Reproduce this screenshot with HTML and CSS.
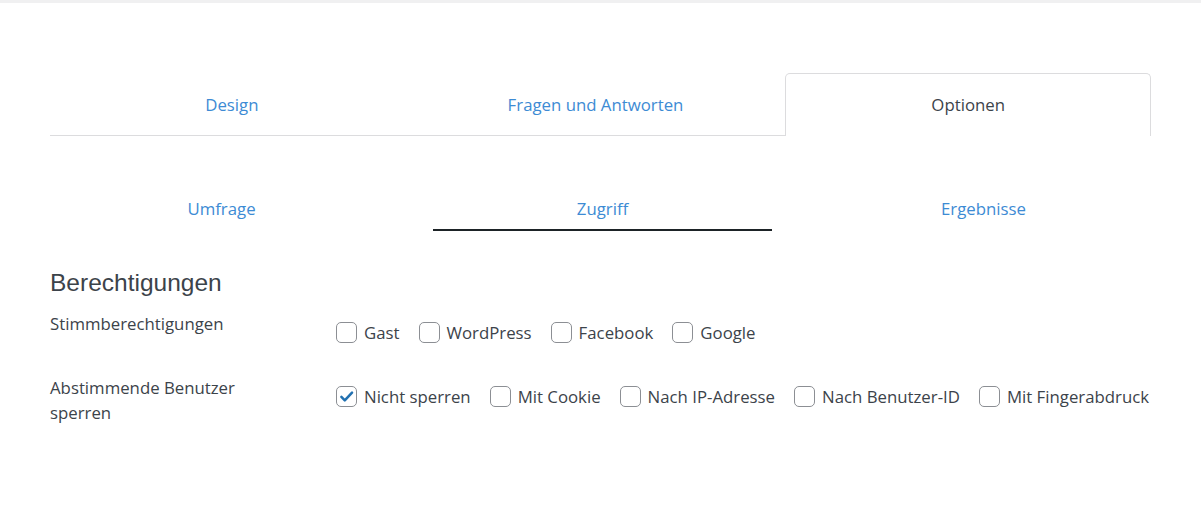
FILE: index.html
```html
<!DOCTYPE html>
<html lang="de">
<head>
<meta charset="utf-8">
<title>Optionen</title>
<link rel="stylesheet" href="styles.css">
</head>
<body>
<div class="topbar"></div>
<div class="wrap">
  <ul class="tabs">
    <li class="tab"><a href="#">Design</a></li>
    <li class="tab"><a href="#">Fragen und Antworten</a></li>
    <li class="tab active"><span>Optionen</span></li>
  </ul>

  <ul class="subtabs">
    <li class="subtab"><a href="#">Umfrage</a></li>
    <li class="subtab active"><a href="#">Zugriff</a></li>
    <li class="subtab"><a href="#">Ergebnisse</a></li>
  </ul>

  <h2 class="heading">Berechtigungen</h2>

  <div class="row">
    <div class="label">Stimmberechtigungen</div>
    <div class="options">
      <label class="opt"><span class="cb"></span>Gast</label>
      <label class="opt"><span class="cb"></span>WordPress</label>
      <label class="opt"><span class="cb"></span>Facebook</label>
      <label class="opt"><span class="cb"></span>Google</label>
    </div>
  </div>

  <div class="row">
    <div class="label">Abstimmende Benutzer sperren</div>
    <div class="options">
      <label class="opt"><span class="cb checked"><svg viewBox="0 0 20 20" width="17" height="17"><path d="M4 10.5l4 4 8.5-9" fill="none" stroke="#2271b1" stroke-width="3" stroke-linecap="round" stroke-linejoin="round"/></svg></span>Nicht sperren</label>
      <label class="opt"><span class="cb"></span>Mit Cookie</label>
      <label class="opt"><span class="cb"></span>Nach IP-Adresse</label>
      <label class="opt"><span class="cb"></span>Nach Benutzer-ID</label>
      <label class="opt"><span class="cb"></span>Mit Fingerabdruck</label>
    </div>
  </div>
</div>
</body>
</html>
```

FILE: styles.css
```css
* { box-sizing: border-box; }
html, body { margin: 0; padding: 0; background: #fff; }
body {
  font-family: "Open Sans", "Noto Sans", sans-serif;
  font-size: 16.8px;
  color: #3c434a;
  width: 1201px;
  height: 517px;
  overflow: hidden;
}
.topbar { height: 3px; background: #f0f0f1; }
.wrap { padding: 0 50px 0 50px; }

.tabs {
  list-style: none;
  margin: 70px 0 0;
  padding: 0;
  display: flex;
  border-bottom: 1px solid #dcdcde;
  height: 63px;
}
.tab {
  flex: 1;
  display: flex;
  align-items: center;
  justify-content: center;
  height: 62px;
}
.tab a { color: #3d8bd4; text-decoration: none; }
.tab.active {
  border: 1px solid #dcdcde;
  border-bottom: 0;
  border-radius: 5px 5px 0 0;
  background: #fff;
  height: 63px;
  margin-left: 8px;
  padding-bottom: 1px;
}
.tab.active span { color: #3c434a; }

.subtabs {
  list-style: none;
  margin: 51px -23px 0 -19px;
  padding: 0;
  display: flex;
}
.subtab {
  flex: 1;
  text-align: center;
  padding: 0 21px;
}
.subtab a {
  display: block;
  color: #3d8bd4;
  text-decoration: none;
  line-height: 24px;
  padding: 10px 0 8px;
  border-bottom: 2px solid transparent;
}
.subtab.active a { border-bottom-color: #1d2327; }

.heading {
  font-family: "Liberation Sans", Arial, sans-serif;
  font-weight: normal;
  font-size: 24.5px;
  line-height: 30px;
  color: #3c434a;
  margin: 37px 0 13px;
}

.row {
  display: flex;
  align-items: flex-start;
  margin-bottom: 32px;
}
.label {
  width: 286px;
  flex: none;
  line-height: 25px;
  padding-right: 50px;
}
.options {
  display: flex;
  flex-wrap: nowrap;
  padding-top: 11px;
}
.opt {
  display: flex;
  align-items: center;
  margin-right: 19px;
  line-height: 21px;
  white-space: nowrap;
}
.cb {
  width: 21px;
  height: 21px;
  border: 1.4px solid #8c8f94;
  border-radius: 5px;
  margin-right: 7px;
  display: flex;
  align-items: center;
  justify-content: center;
  background: #fff;
}
```
